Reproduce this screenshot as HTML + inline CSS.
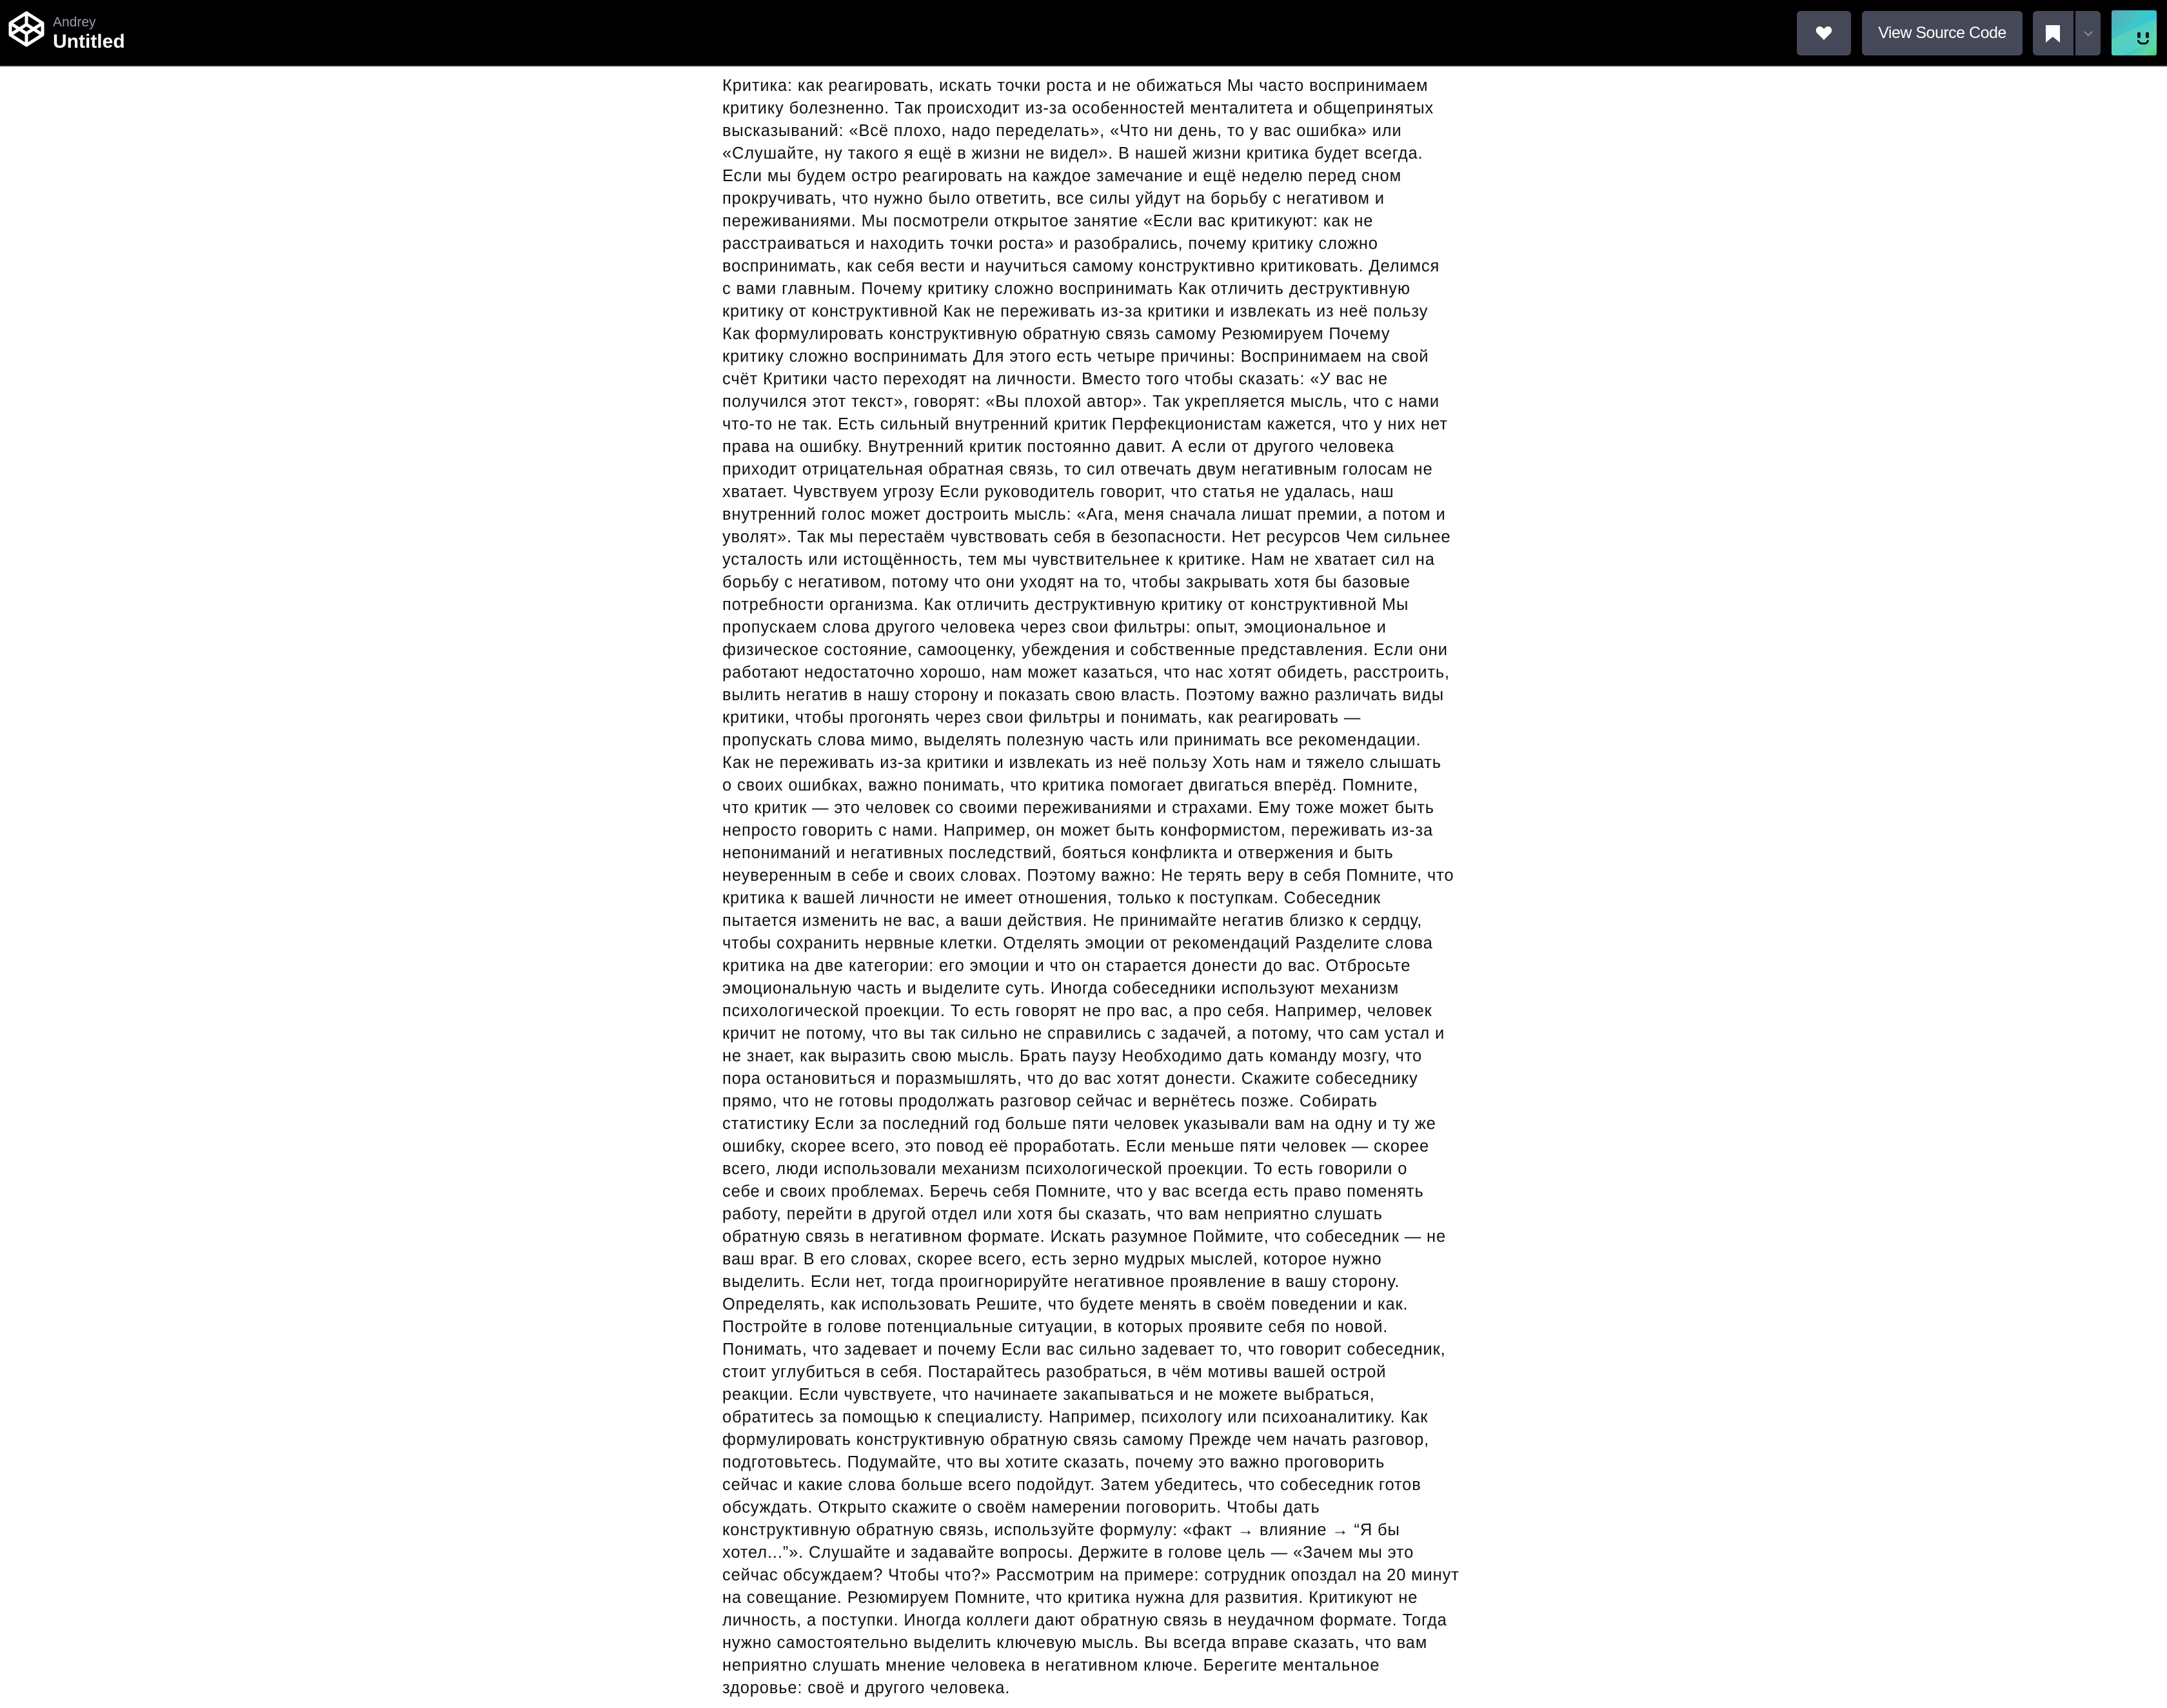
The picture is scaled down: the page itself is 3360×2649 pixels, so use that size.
<!DOCTYPE html>
<html><head><meta charset="utf-8"><style>
html,body{margin:0;padding:0;background:#fff;width:3360px;height:2649px;overflow:hidden}
.hdr{position:absolute;left:0;top:0;width:3360px;height:101px;background:#000;border-bottom:2px solid #2c2c2c}
.logo{position:absolute;left:13px;top:17px}
.u1{position:absolute;left:82px;top:23px;color:#9b9dad;font:21px "Liberation Sans",sans-serif}
.u2{position:absolute;left:82px;top:48px;color:#fff;font:bold 30px "Liberation Sans",sans-serif}
.btn{position:absolute;top:17px;height:69px;background:#444857;border-radius:6px}
.txt{position:absolute;left:1120px;top:116px;font:25.5px/35px "Liberation Sans","Noto Sans CJK SC",sans-serif;color:#111;letter-spacing:0.85px;white-space:nowrap}
</style></head><body>
<div class="hdr">
<svg class="logo" width="56" height="56" viewBox="0 0 56 56" fill="none" stroke="#fff" stroke-width="5" stroke-linejoin="round"><path d="M28 3L53 19V37L28 53L3 37V19Z M3 19L28 35L53 19 M3 37L28 21L53 37 M28 3V21 M28 35V53"/></svg>
<div class="u1">Andrey</div><div class="u2">Untitled</div>
<div class="btn" style="left:2786px;width:84px"><svg style="position:absolute;left:29px;top:22px" width="26" height="24" viewBox="0 0 26 24"><path d="M13 23L2.5 12.5C-1 9 1 2 6.5 2C9.5 2 11.5 4 13 6C14.5 4 16.5 2 19.5 2C25 2 27 9 23.5 12.5Z" fill="#fff"/></svg></div>
<div class="btn" style="left:2887px;width:249px;color:#fff;font:25px 'Liberation Sans',sans-serif;text-align:center;line-height:69px;letter-spacing:-0.5px">View Source Code</div>
<div class="btn" style="left:3152px;width:105px"><div style="position:absolute;left:63px;top:0;width:3px;height:69px;background:#000"></div>
<svg style="position:absolute;left:20px;top:22px" width="22" height="27" viewBox="0 0 22 27"><path d="M0 0H22V27L11 18L0 27Z" fill="#fff"/></svg>
<svg style="position:absolute;left:78px;top:30px" width="16" height="10" viewBox="0 0 16 10"><path d="M2 2L8 8L14 2" stroke="#8a8c9c" stroke-width="2" fill="none"/></svg></div>
<div style="position:absolute;left:3274px;top:16px;width:70px;height:70px;border-radius:3px;overflow:hidden;background:linear-gradient(135deg,#5aa9b5 0%,#3fc7c9 40%,#2cc6e0 60%,#5fd7a0 85%,#40d080 100%)">
<div style="position:absolute;left:-10px;top:30px;width:90px;height:30px;background:rgba(120,220,170,.45);transform:rotate(-25deg)"></div>
<div style="position:absolute;left:40px;top:34px;width:5px;height:9px;background:#111;border-radius:2px"></div>
<div style="position:absolute;left:53px;top:34px;width:5px;height:9px;background:#111;border-radius:2px"></div>
<div style="position:absolute;left:40px;top:46px;width:18px;height:7px;border:3px solid #111;border-top:none;border-radius:0 0 10px 10px;box-sizing:border-box"></div></div>
</div>
<div class="txt">Критика: как реагировать, искать точки роста и не обижаться Мы часто воспринимаем<br>
критику болезненно. Так происходит из-за особенностей менталитета и общепринятых<br>
высказываний: «Всё плохо, надо переделать», «Что ни день, то у вас ошибка» или<br>
«Слушайте, ну такого я ещё в жизни не видел». В нашей жизни критика будет всегда.<br>
Если мы будем остро реагировать на каждое замечание и ещё неделю перед сном<br>
прокручивать, что нужно было ответить, все силы уйдут на борьбу с негативом и<br>
переживаниями. Мы посмотрели открытое занятие «Если вас критикуют: как не<br>
расстраиваться и находить точки роста» и разобрались, почему критику сложно<br>
воспринимать, как себя вести и научиться самому конструктивно критиковать. Делимся<br>
с вами главным. Почему критику сложно воспринимать Как отличить деструктивную<br>
критику от конструктивной Как не переживать из-за критики и извлекать из неё пользу<br>
Как формулировать конструктивную обратную связь самому Резюмируем Почему<br>
критику сложно воспринимать Для этого есть четыре причины: Воспринимаем на свой<br>
счёт Критики часто переходят на личности. Вместо того чтобы сказать: «У вас не<br>
получился этот текст», говорят: «Вы плохой автор». Так укрепляется мысль, что с нами<br>
что-то не так. Есть сильный внутренний критик Перфекционистам кажется, что у них нет<br>
права на ошибку. Внутренний критик постоянно давит. А если от другого человека<br>
приходит отрицательная обратная связь, то сил отвечать двум негативным голосам не<br>
хватает. Чувствуем угрозу Если руководитель говорит, что статья не удалась, наш<br>
внутренний голос может достроить мысль: «Ага, меня сначала лишат премии, а потом и<br>
уволят». Так мы перестаём чувствовать себя в безопасности. Нет ресурсов Чем сильнее<br>
усталость или истощённость, тем мы чувствительнее к критике. Нам не хватает сил на<br>
борьбу с негативом, потому что они уходят на то, чтобы закрывать хотя бы базовые<br>
потребности организма. Как отличить деструктивную критику от конструктивной Мы<br>
пропускаем слова другого человека через свои фильтры: опыт, эмоциональное и<br>
физическое состояние, самооценку, убеждения и собственные представления. Если они<br>
работают недостаточно хорошо, нам может казаться, что нас хотят обидеть, расстроить,<br>
вылить негатив в нашу сторону и показать свою власть. Поэтому важно различать виды<br>
критики, чтобы прогонять через свои фильтры и понимать, как реагировать —<br>
пропускать слова мимо, выделять полезную часть или принимать все рекомендации.<br>
Как не переживать из-за критики и извлекать из неё пользу Хоть нам и тяжело слышать<br>
о своих ошибках, важно понимать, что критика помогает двигаться вперёд. Помните,<br>
что критик — это человек со своими переживаниями и страхами. Ему тоже может быть<br>
непросто говорить с нами. Например, он может быть конформистом, переживать из-за<br>
непониманий и негативных последствий, бояться конфликта и отвержения и быть<br>
неуверенным в себе и своих словах. Поэтому важно: Не терять веру в себя Помните, что<br>
критика к вашей личности не имеет отношения, только к поступкам. Собеседник<br>
пытается изменить не вас, а ваши действия. Не принимайте негатив близко к сердцу,<br>
чтобы сохранить нервные клетки. Отделять эмоции от рекомендаций Разделите слова<br>
критика на две категории: его эмоции и что он старается донести до вас. Отбросьте<br>
эмоциональную часть и выделите суть. Иногда собеседники используют механизм<br>
психологической проекции. То есть говорят не про вас, а про себя. Например, человек<br>
кричит не потому, что вы так сильно не справились с задачей, а потому, что сам устал и<br>
не знает, как выразить свою мысль. Брать паузу Необходимо дать команду мозгу, что<br>
пора остановиться и поразмышлять, что до вас хотят донести. Скажите собеседнику<br>
прямо, что не готовы продолжать разговор сейчас и вернётесь позже. Собирать<br>
статистику Если за последний год больше пяти человек указывали вам на одну и ту же<br>
ошибку, скорее всего, это повод её проработать. Если меньше пяти человек — скорее<br>
всего, люди использовали механизм психологической проекции. То есть говорили о<br>
себе и своих проблемах. Беречь себя Помните, что у вас всегда есть право поменять<br>
работу, перейти в другой отдел или хотя бы сказать, что вам неприятно слушать<br>
обратную связь в негативном формате. Искать разумное Поймите, что собеседник — не<br>
ваш враг. В его словах, скорее всего, есть зерно мудрых мыслей, которое нужно<br>
выделить. Если нет, тогда проигнорируйте негативное проявление в вашу сторону.<br>
Определять, как использовать Решите, что будете менять в своём поведении и как.<br>
Постройте в голове потенциальные ситуации, в которых проявите себя по новой.<br>
Понимать, что задевает и почему Если вас сильно задевает то, что говорит собеседник,<br>
стоит углубиться в себя. Постарайтесь разобраться, в чём мотивы вашей острой<br>
реакции. Если чувствуете, что начинаете закапываться и не можете выбраться,<br>
обратитесь за помощью к специалисту. Например, психологу или психоаналитику. Как<br>
формулировать конструктивную обратную связь самому Прежде чем начать разговор,<br>
подготовьтесь. Подумайте, что вы хотите сказать, почему это важно проговорить<br>
сейчас и какие слова больше всего подойдут. Затем убедитесь, что собеседник готов<br>
обсуждать. Открыто скажите о своём намерении поговорить. Чтобы дать<br>
конструктивную обратную связь, используйте формулу: «факт → влияние → “Я бы<br>
хотел...”». Слушайте и задавайте вопросы. Держите в голове цель — «Зачем мы это<br>
сейчас обсуждаем? Чтобы что?» Рассмотрим на примере: сотрудник опоздал на 20 минут<br>
на совещание. Резюмируем Помните, что критика нужна для развития. Критикуют не<br>
личность, а поступки. Иногда коллеги дают обратную связь в неудачном формате. Тогда<br>
нужно самостоятельно выделить ключевую мысль. Вы всегда вправе сказать, что вам<br>
неприятно слушать мнение человека в негативном ключе. Берегите ментальное<br>
здоровье: своё и другого человека.</div>
</body></html>
